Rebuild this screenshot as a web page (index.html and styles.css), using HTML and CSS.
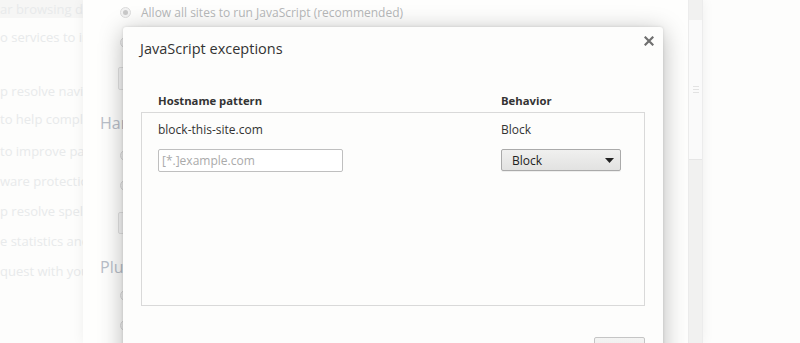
FILE: index.html
```html
<!DOCTYPE html>
<html>
<head>
<meta charset="utf-8">
<link rel="stylesheet" href="styles.css">
</head>
<body>
<div class="back-page">
  <div class="back-col">
    <div class="back-line first">ar browsing data</div>
    <div class="back-line">o services to improve</div>
    <div class="back-line gap">p resolve navigation</div>
    <div class="back-line l4">to help complete</div>
    <div class="back-line">to improve page</div>
    <div class="back-line">ware protection</div>
    <div class="back-line">p resolve spelling</div>
    <div class="back-line">e statistics and</div>
    <div class="back-line">quest with your</div>
  </div>
</div>

<div class="mid-page">
  <div class="mid-content">
    <div class="opt o1"><span class="radio checked"></span><span>Allow all sites to run JavaScript (recommended)</span></div>
    <div class="opt"><span class="radio"></span><span>Do not allow any site to run JavaScript</span></div>
    <div class="mid-btn b1">Manage exceptions...</div>
    <div class="mid-h h1">Handlers</div>
    <div class="opt o3"><span class="radio checked"></span><span>Allow sites to ask</span></div>
    <div class="opt"><span class="radio"></span><span>Do not allow</span></div>
    <div class="mid-btn b2">Manage handlers...</div>
    <div class="mid-h h2">Plugins</div>
    <div class="opt o5"><span class="radio checked"></span><span>Run automatically</span></div>
    <div class="opt"><span class="radio"></span><span>Click to play</span></div>
  </div>
  <div class="scrollbar"><div class="thumb"><span class="grip"></span></div></div>
</div>

<div class="dialog">
  <div class="dlg-head">
    <h1 class="dlg-title">JavaScript exceptions</h1>
    <svg class="close" width="10" height="10" viewBox="0 0 10 10"><path d="M1.5 1.5 L8.5 8.5 M8.5 1.5 L1.5 8.5" stroke="#6f6f6f" stroke-width="2.2" stroke-linecap="square"/></svg>
  </div>
  <div class="dlg-body">
    <div class="cols">
      <span class="col-host">Hostname pattern</span>
      <span class="col-beh">Behavior</span>
    </div>
    <div class="list">
      <div class="row">
        <span class="col-host">block-this-site.com</span>
        <span class="col-beh">Block</span>
      </div>
      <div class="row edit">
        <span class="col-host"><span class="input">[*.]example.com</span></span>
        <span class="col-beh"><span class="select"><span>Block</span><svg width="9" height="5" viewBox="0 0 9 5"><path d="M0 0 H9 L4.5 5 Z" fill="#222"/></svg></span></span>
      </div>
    </div>
    <div class="dlg-foot"><span class="btn">Done</span></div>
  </div>
</div>
</body>
</html>
```
FILE: styles.css
```css
html, body {
  margin: 0;
  padding: 0;
  width: 800px;
  height: 343px;
  overflow: hidden;
  background: #fdfdfc;
  font-family: "Open Sans", "DejaVu Sans", sans-serif;
}

.back-page {
  position: absolute;
  left: 0;
  top: 0;
  width: 800px;
  height: 343px;
  background: #fdfdfc;
}

.back-col {
  width: 90px;
  overflow: hidden;
  display: flex;
  flex-direction: column;
}

.back-line {
  height: 30px;
  line-height: 30px;
  font-size: 13px;
  color: #e8eaeb;
  white-space: nowrap;
}

.back-line.first {
  height: 18px;
  line-height: 18px;
  background: #f6f6f5;
  margin-bottom: 4px;
}

.back-line.gap {
  margin-top: 24px;
}

.back-line.l4 {
  margin-top: -2px;
  margin-bottom: 2px;
}

.mid-page {
  position: absolute;
  left: 83px;
  top: 0;
  width: 620px;
  height: 343px;
  background: #fefefd;
  box-shadow: 0 0 12px rgba(0, 0, 0, 0.06);
  display: flex;
}

.mid-content {
  flex: 1;
  padding: 0 0 0 17px;
  display: flex;
  flex-direction: column;
}

.opt {
  height: 30px;
  flex: none;
  display: flex;
  align-items: center;
  gap: 10px;
  padding-left: 20px;
  font-size: 12px;
  color: #b6b8b9;
  white-space: nowrap;
}

.opt.o1 { margin-top: -3px; }
.opt.o3 { margin-top: 2px; }
.opt.o5 { margin-top: -2px; }

.radio {
  width: 11px;
  height: 11px;
  border-radius: 50%;
  border: 1px solid #dcdcdc;
  background: #f3f3f3;
  box-sizing: border-box;
  position: relative;
}

.radio.checked::after {
  content: "";
  position: absolute;
  left: 2px;
  top: 2px;
  width: 5px;
  height: 5px;
  border-radius: 50%;
  background: #c9c9c9;
}

.mid-btn {
  flex: none;
  margin-left: 18px;
  width: 150px;
  height: 23px;
  border: 1px solid #e2e2e2;
  border-radius: 2px;
  background: #f7f7f7;
  box-sizing: border-box;
  font-size: 12px;
  color: #c4c4c4;
  line-height: 21px;
  padding-left: 10px;
}

.mid-btn.b1 { margin-top: 10px; }
.mid-btn.b2 { margin-top: 12px; height: 22px; }

.mid-h {
  flex: none;
  height: 30px;
  margin-top: 18px;
  line-height: 30px;
  font-size: 16px;
  color: #b9bfc9;
}

.scrollbar {
  width: 13px;
  border-left: 1px solid #ececec;
  border-right: 1px solid #ececec;
  background: #f1f1f0;
}

.thumb {
  height: 139px;
  margin-top: 20px;
  background: #fafafa;
  border-bottom: 1px solid #e6e6e6;
  display: flex;
  align-items: center;
  justify-content: center;
}

.grip {
  width: 6px;
  height: 5px;
  border-top: 1px solid #e2e2e2;
  border-bottom: 1px solid #e2e2e2;
  position: relative;
}

.grip::after {
  content: "";
  position: absolute;
  left: 0;
  right: 0;
  top: 2px;
  border-top: 1px solid #e2e2e2;
}

.dialog {
  position: absolute;
  left: 123px;
  top: 27px;
  width: 540px;
  height: 360px;
  background: #fdfdfc;
  border-radius: 3px;
  box-shadow: 0 4px 24px rgba(0, 0, 0, 0.28), 0 0 3px rgba(0, 0, 0, 0.12);
  color: #333;
}

.dlg-head {
  height: 44px;
  display: flex;
  align-items: flex-start;
  justify-content: space-between;
  padding: 0 9px 0 17px;
}

.dlg-title {
  margin: 12px 0 0;
  font-size: 14.5px;
  font-weight: normal;
  color: #333;
}

.close {
  margin-top: 9px;
}

.dlg-body {
  padding: 18px 18px 0;
  display: flex;
  flex-direction: column;
}

.cols {
  display: flex;
  height: 23px;
  line-height: 23px;
  font-size: 11.3px;
  font-weight: bold;
  color: #333;
  padding-left: 17px;
}

.cols .col-host {
  width: 343px;
}

.row .col-host {
  width: 343px;
}

.list {
  border: 1px solid #d9d9d9;
  height: 194px;
  box-sizing: border-box;
  padding-top: 5px;
}

.row {
  display: flex;
  height: 23px;
  align-items: center;
  padding-left: 16px;
  font-size: 12px;
  color: #333;
}

.row.edit {
  margin-top: 7px;
  height: 24px;
}

.input {
  display: block;
  width: 185px;
  height: 23px;
  border: 1px solid #bfbfbf;
  border-radius: 2px;
  box-sizing: border-box;
  color: #aaa;
  line-height: 21px;
  padding-left: 3px;
  background: #fff;
}

.select {
  width: 120px;
  height: 22px;
  border: 1px solid #aaa;
  border-radius: 2px;
  box-sizing: border-box;
  background: linear-gradient(#f0f0ef, #e2e2e1);
  display: flex;
  align-items: center;
  justify-content: space-between;
  padding: 0 6px 0 10px;
  color: #222;
  box-shadow: 0 1px 0 rgba(0, 0, 0, 0.06);
}

.dlg-foot {
  display: flex;
  justify-content: flex-end;
  padding-top: 31px;
}

.btn {
  width: 51px;
  height: 24px;
  border: 1px solid #c5c5c5;
  border-radius: 2px;
  box-sizing: border-box;
  background: linear-gradient(#f4f4f3, #e8e8e7);
  font-size: 12px;
  text-align: center;
  line-height: 22px;
  color: #333;
}
```
